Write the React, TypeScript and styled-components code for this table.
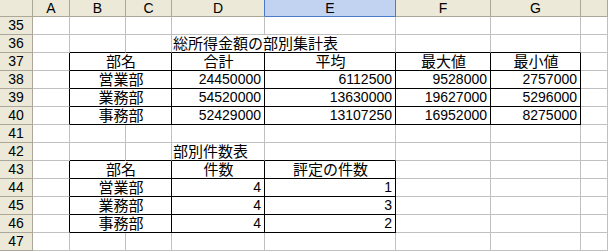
import React from "react";
import styled, { createGlobalStyle } from "styled-components";

const GlobalStyle = createGlobalStyle`
  html, body {
    margin: 0;
    padding: 0;
    background: #ffffff;
  }
  body {
    font-family: "Liberation Sans", "Noto Sans CJK JP", sans-serif;
  }
`;

const COLS = ["A", "B", "C", "D", "E", "F", "G", "H"];
const WIDTHS = [37, 56, 46, 93, 131, 95, 90];
const FIRST_ROW = 35;
const LAST_ROW = 47;

const GRID = "#c0c0c0";
const BLACK = "#000000";
const HEAD_LINE = "#aca899";
const SEL_LINE = "#4a7bc9";

// bordered ranges: rows from..to, col index from..to
const tables = [
  { r1: 37, r2: 40, c1: 1, c2: 6 },
  { r1: 43, r2: 46, c1: 1, c2: 4 },
];

const inTable = (r: number, c: number) =>
  tables.some((t) => r >= t.r1 && r <= t.r2 && c >= t.c1 && c <= t.c2);

type CellData = { text: string; align?: "left" | "center" | "right"; jp?: boolean; span?: number };

const data: Record<string, CellData> = {
  D36: { text: "総所得金額の部別集計表", align: "left", jp: true, span: 2 },
  B37: { text: "部名", align: "center", jp: true, span: 2 },
  D37: { text: "合計", align: "center", jp: true },
  E37: { text: "平均", align: "center", jp: true },
  F37: { text: "最大値", align: "center", jp: true },
  G37: { text: "最小値", align: "center", jp: true },
  B38: { text: "営業部", align: "center", jp: true, span: 2 },
  D38: { text: "24450000" },
  E38: { text: "6112500" },
  F38: { text: "9528000" },
  G38: { text: "2757000" },
  B39: { text: "業務部", align: "center", jp: true, span: 2 },
  D39: { text: "54520000" },
  E39: { text: "13630000" },
  F39: { text: "19627000" },
  G39: { text: "5296000" },
  B40: { text: "事務部", align: "center", jp: true, span: 2 },
  D40: { text: "52429000" },
  E40: { text: "13107250" },
  F40: { text: "16952000" },
  G40: { text: "8275000" },
  D42: { text: "部別件数表", align: "left", jp: true },
  B43: { text: "部名", align: "center", jp: true, span: 2 },
  D43: { text: "件数", align: "center", jp: true },
  E43: { text: "評定の件数", align: "center", jp: true },
  B44: { text: "営業部", align: "center", jp: true, span: 2 },
  D44: { text: "4" },
  E44: { text: "1" },
  B45: { text: "業務部", align: "center", jp: true, span: 2 },
  D45: { text: "4" },
  E45: { text: "3" },
  B46: { text: "事務部", align: "center", jp: true, span: 2 },
  D46: { text: "4" },
  E46: { text: "2" },
};

const Sheet = styled.div`
  display: grid;
  grid-template-columns: 33px ${WIDTHS.map((w) => w + "px").join(" ")} 1fr;
  grid-template-rows: 17px repeat(${LAST_ROW - FIRST_ROW + 1}, 18px);
  width: 608px;
  height: 251px;
  overflow: hidden;
  background: #ffffff;
`;

const Corner = styled.div`
  box-sizing: border-box;
  background: #ece9d8;
  border-right: 1px solid ${HEAD_LINE};
  border-bottom: 1px solid ${HEAD_LINE};
`;

const ColHead = styled.div<{ $selected?: boolean; $rightLine?: string }>`
  box-sizing: border-box;
  background: ${(p) => (p.$selected ? "#c1d3f0" : "#ece9d8")};
  border-right: 1px solid ${(p) => p.$rightLine || HEAD_LINE};
  border-bottom: 1px solid ${(p) => (p.$selected ? SEL_LINE : HEAD_LINE)};
  font-size: 14px;
  line-height: 16px;
  text-align: center;
  color: #000;
`;

const RowHead = styled.div`
  box-sizing: border-box;
  background: #ece9d8;
  border-right: 1px solid ${HEAD_LINE};
  border-bottom: 1px solid ${HEAD_LINE};
  font-size: 14px;
  line-height: 17px;
  text-align: center;
  color: #000;
`;

const Cell = styled.div<{ $span: number; $align: string; $jp?: boolean; $right: string; $bottom: string }>`
  box-sizing: border-box;
  grid-column: span ${(p) => p.$span};
  border-right: 1px solid ${(p) => p.$right};
  border-bottom: 1px solid ${(p) => p.$bottom};
  font-size: ${(p) => (p.$jp ? "15px" : "14px")};
  line-height: 17px;
  text-align: ${(p) => p.$align};
  padding: ${(p) => (p.$align === "right" ? "0 3px 0 0" : "0 0 0 1px")};
  white-space: nowrap;
  overflow: visible;
  color: #000;
`;

const App = () => {
  const cells: React.ReactNode[] = [];
  cells.push(<Corner key="corner" />);
  COLS.forEach((c) => {
    const sel = c === "E";
    const rightLine = c === "D" || c === "E" ? SEL_LINE : undefined;
    // H is only partly visible, its letter sits off screen
    cells.push(
      <ColHead key={"h" + c} $selected={sel} $rightLine={rightLine}>
        {c === "H" ? "" : c}
      </ColHead>
    );
  });

  for (let r = FIRST_ROW; r <= LAST_ROW; r++) {
    cells.push(<RowHead key={"r" + r}>{r}</RowHead>);
    let c = 0;
    while (c < COLS.length) {
      const key = COLS[c] + r;
      const d = data[key];
      const span = d?.span || 1;
      const last = c + span - 1;
      const right = inTable(r, last) || inTable(r, last + 1) ? BLACK : GRID;
      const bottom = inTable(r, c) || inTable(r + 1, c) ? BLACK : GRID;
      cells.push(
        <Cell key={key} $span={span} $align={d?.align || "right"} $jp={d?.jp} $right={right} $bottom={bottom}>
          {d?.text}
        </Cell>
      );
      c += span;
    }
  }

  return (
    <>
      <GlobalStyle />
      <Sheet>{cells}</Sheet>
    </>
  );
};

export default App;
